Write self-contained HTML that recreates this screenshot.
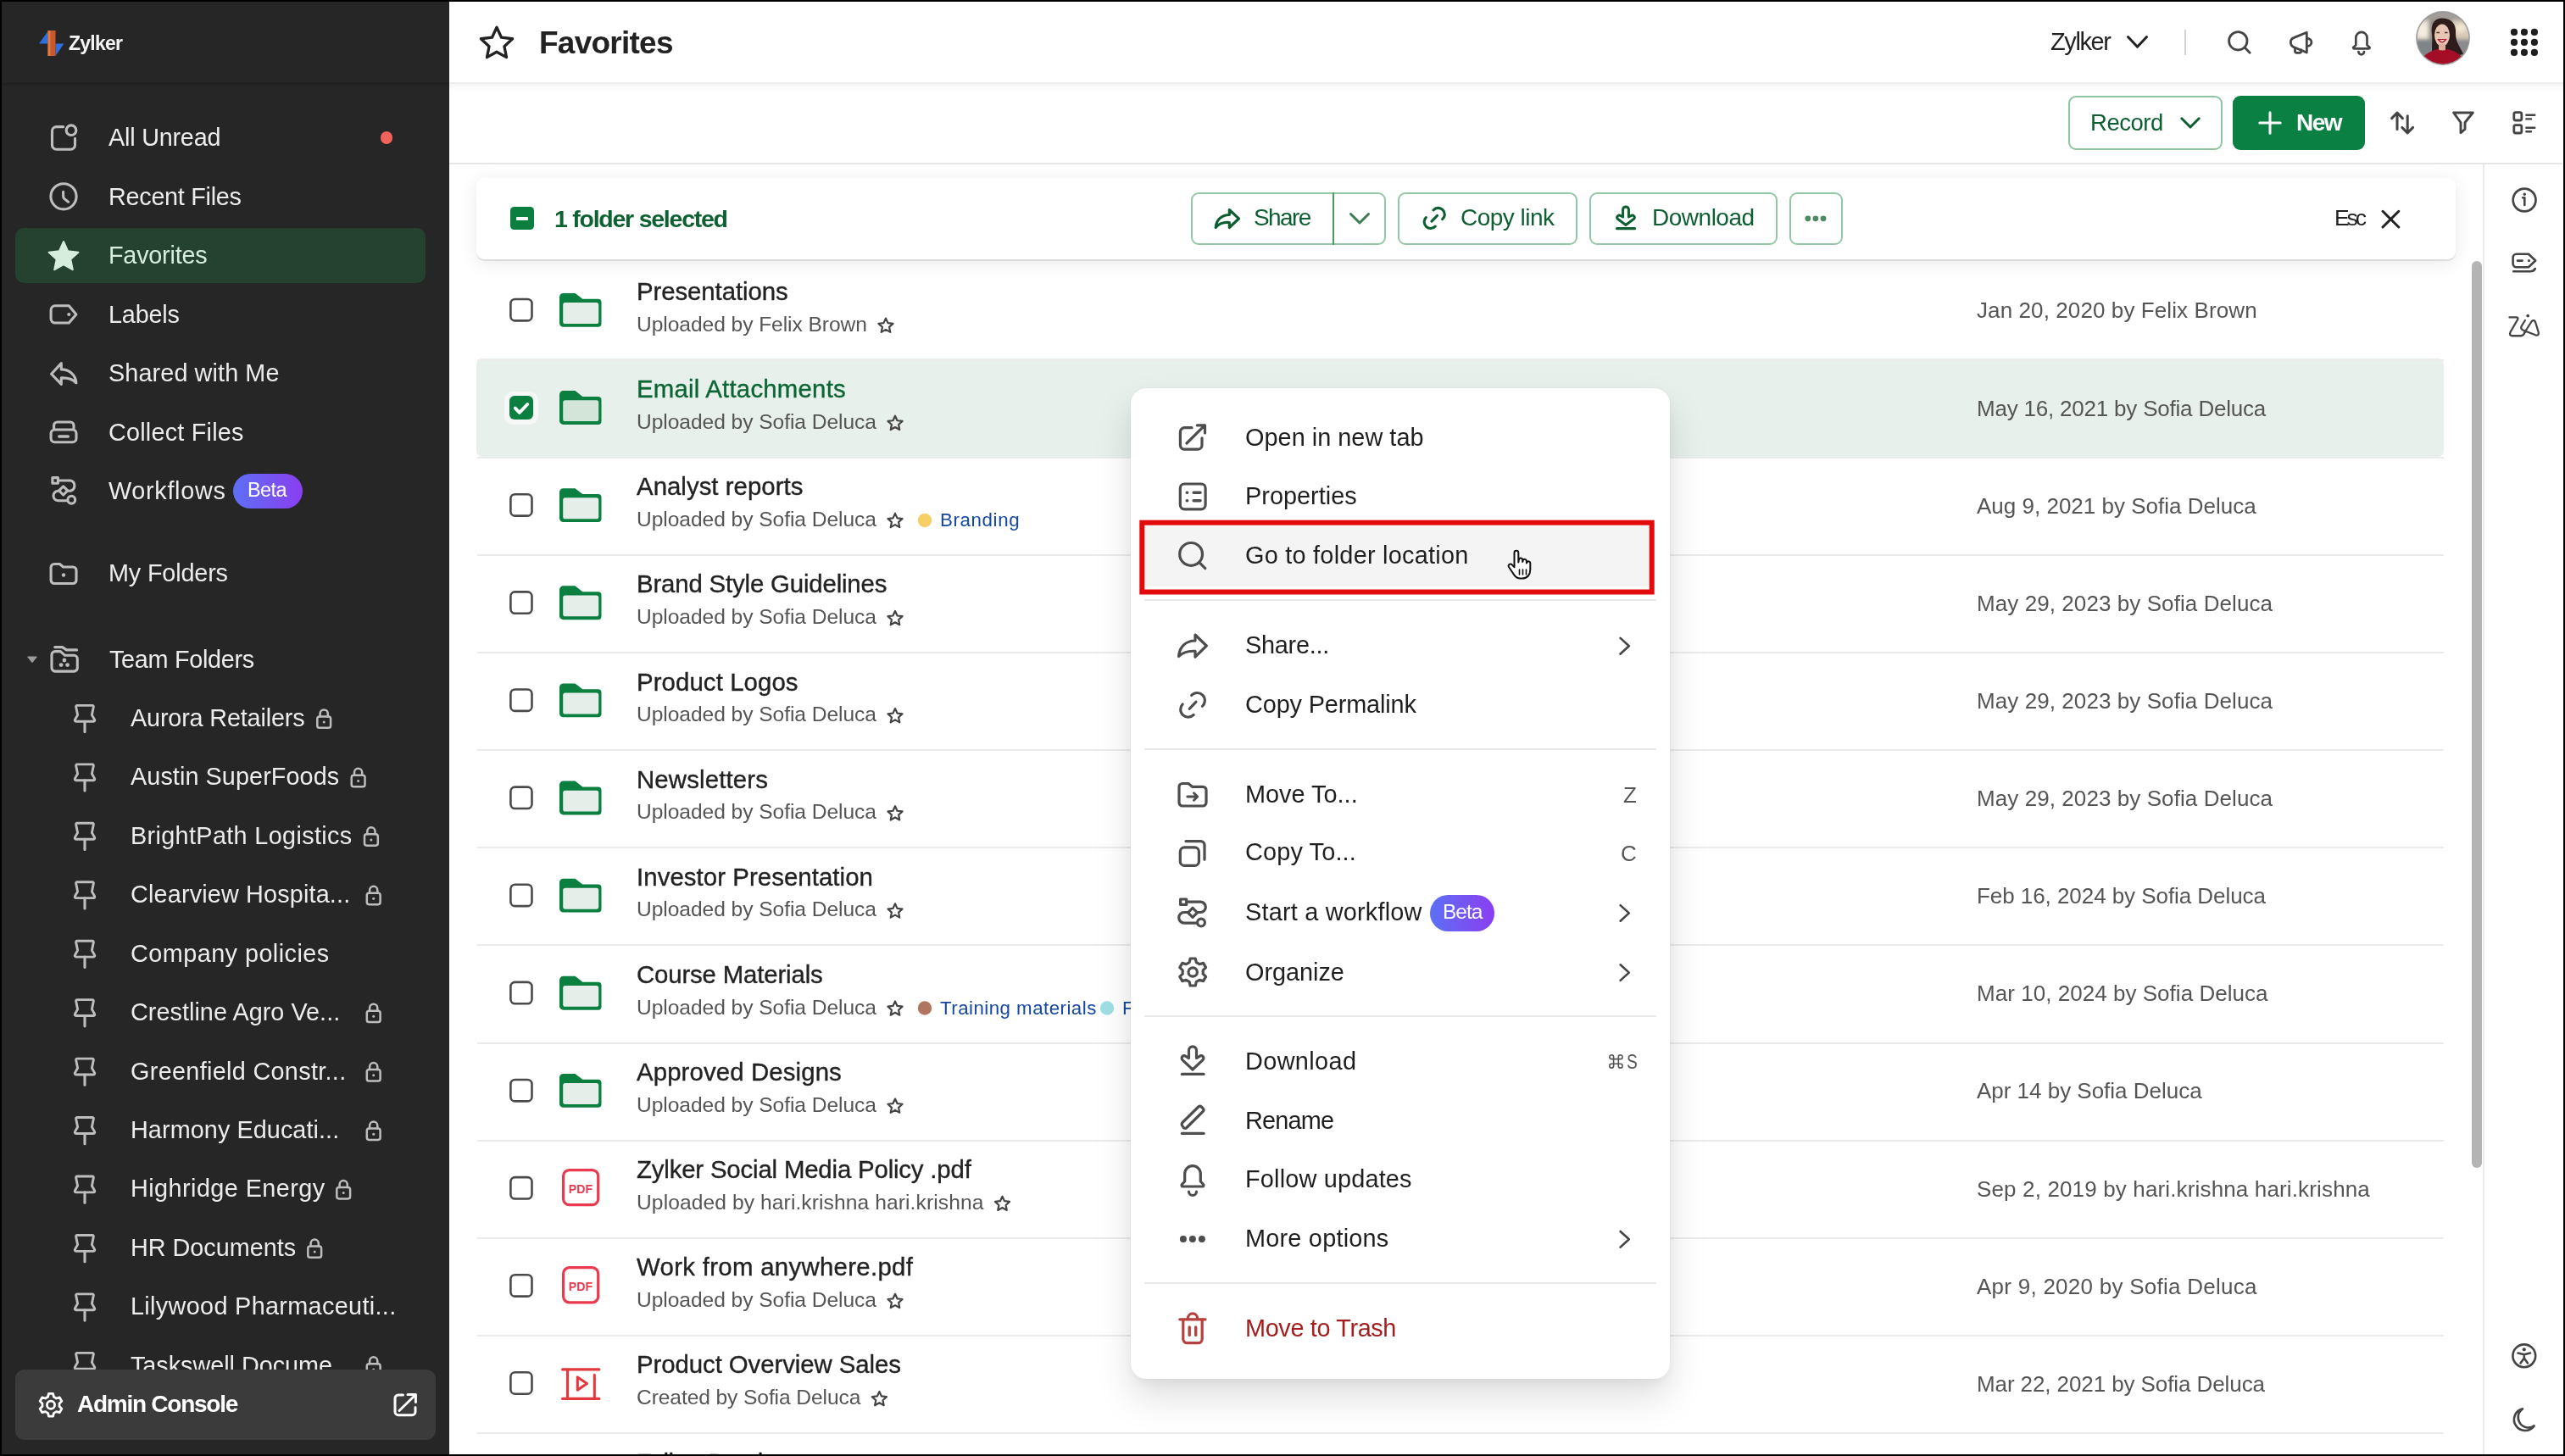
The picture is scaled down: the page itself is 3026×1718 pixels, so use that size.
<!DOCTYPE html><html><head><meta charset="utf-8"><style>
html,body{margin:0;padding:0;}
body{width:3026px;height:1718px;background:#000;position:relative;overflow:hidden;font-family:"Liberation Sans",sans-serif;}
.t{position:absolute;white-space:nowrap;line-height:1;will-change:transform;}
.r{position:absolute;display:block;}
</style></head><body>
<div class="r" style="left:2.00px;top:2.00px;width:3022.00px;height:1714.00px;background:#fff;"></div>
<div class="r" style="left:2.00px;top:2.00px;width:528.00px;height:1714.00px;background:#262626;"></div>
<div class="r" style="left:2.00px;top:97.50px;width:528.00px;height:1.50px;background:#1e1e1e;"></div>
<div class="r" style="left:2.00px;top:99.00px;width:528.00px;height:4.00px;background:linear-gradient(#222222,#262626);"></div>
<div class="t" style="left:81.0px;top:39.5px;font-size:23.00px;color:#f4f4f4;font-weight:700;letter-spacing:-0.753px;">Zylker</div>
<div class="r" style="left:18.00px;top:269.00px;width:484.00px;height:65.00px;background:#25412f;border-radius:10px;"></div>
<div class="t" style="left:127.5px;top:147.6px;font-size:28.80px;color:#ececec;letter-spacing:-0.219px;">All Unread</div>
<div class="t" style="left:127.5px;top:217.6px;font-size:28.80px;color:#ececec;letter-spacing:-0.278px;">Recent Files</div>
<div class="t" style="left:127.5px;top:356.6px;font-size:28.80px;color:#ececec;letter-spacing:-0.174px;">Labels</div>
<div class="t" style="left:127.5px;top:425.6px;font-size:28.80px;color:#ececec;letter-spacing:0.108px;">Shared with Me</div>
<div class="t" style="left:127.5px;top:495.6px;font-size:28.80px;color:#ececec;letter-spacing:0.221px;">Collect Files</div>
<div class="t" style="left:127.5px;top:564.6px;font-size:28.80px;color:#ececec;letter-spacing:0.689px;">Workflows</div>
<div class="t" style="left:127.5px;top:661.6px;font-size:28.80px;color:#ececec;letter-spacing:-0.159px;">My Folders</div>
<div class="t" style="left:128.8px;top:763.6px;font-size:28.80px;color:#ececec;letter-spacing:-0.297px;">Team Folders</div>
<div class="t" style="left:127.5px;top:286.6px;font-size:28.80px;color:#d6ecdd;letter-spacing:-0.230px;">Favorites</div>
<div class="r" style="left:448.70px;top:155.30px;width:14.60px;height:14.60px;background:#f0625c;border-radius:50%;"></div>
<div class="r" style="left:275.00px;top:559.00px;width:82.00px;height:41.00px;background:linear-gradient(90deg,#5d70f6,#8a3ef1);border-radius:21px;"></div>
<div class="t" style="left:292.0px;top:566.8px;font-size:23.50px;color:#ffffff;letter-spacing:-0.615px;">Beta</div>
<div class="r" style="left:0;top:0;width:530px;height:1616px;overflow:hidden;">
<div class="t" style="left:153.8px;top:832.8px;font-size:28.80px;color:#ececec;letter-spacing:-0.166px;">Aurora Retailers</div>
<div class="t" style="left:153.8px;top:902.3px;font-size:28.80px;color:#ececec;letter-spacing:0.078px;">Austin SuperFoods</div>
<div class="t" style="left:153.8px;top:971.7px;font-size:28.80px;color:#ececec;letter-spacing:0.351px;">BrightPath Logistics</div>
<div class="t" style="left:153.8px;top:1041.2px;font-size:28.80px;color:#ececec;letter-spacing:0.163px;">Clearview Hospita...</div>
<div class="t" style="left:153.8px;top:1110.6px;font-size:28.80px;color:#ececec;letter-spacing:0.459px;">Company policies</div>
<div class="t" style="left:153.8px;top:1180.1px;font-size:28.80px;color:#ececec;letter-spacing:0.035px;">Crestline Agro Ve...</div>
<div class="t" style="left:153.8px;top:1249.5px;font-size:28.80px;color:#ececec;letter-spacing:0.320px;">Greenfield Constr...</div>
<div class="t" style="left:153.8px;top:1319.0px;font-size:28.80px;color:#ececec;letter-spacing:0.076px;">Harmony Educati...</div>
<div class="t" style="left:153.8px;top:1388.4px;font-size:28.80px;color:#ececec;letter-spacing:0.444px;">Highridge Energy</div>
<div class="t" style="left:153.8px;top:1457.9px;font-size:28.80px;color:#ececec;letter-spacing:-0.006px;">HR Documents</div>
<div class="t" style="left:153.8px;top:1527.3px;font-size:28.80px;color:#ececec;letter-spacing:0.338px;">Lilywood Pharmaceuti...</div>
<div class="t" style="left:153.8px;top:1596.8px;font-size:28.80px;color:#ececec;letter-spacing:-0.027px;">Taskswell Docume...</div>
<svg class="r" style="left:0;top:0" width="3026" height="1718" viewBox="0 0 3026 1718"><g transform="translate(0 0.00)"><path d="M91 832.4 H109 A1.4 1.4 0 0 1 110.3 834.3 L108.4 843.6 L111.6 849.2 A1.4 1.4 0 0 1 110.4 851.3 H89.6 A1.4 1.4 0 0 1 88.4 849.2 L91.6 843.6 L89.7 834.3 A1.4 1.4 0 0 1 91 832.4 Z" fill="none" stroke="#bdbdbd" stroke-width="2.9" stroke-linecap="round" stroke-linejoin="round" /><path d="M100 851.3 V863.6" fill="none" stroke="#bdbdbd" stroke-width="3.1" stroke-linecap="round" stroke-linejoin="round" /><g transform="translate(-0.90 0)"><rect x="375.2" y="845.4" width="15.8" height="13.4" rx="2.6" fill="none" stroke="#bdbdbd" stroke-width="2.5"/><path d="M378.5 845.4 V842 A4.6 4.6 0 0 1 387.7 842 V845.4" fill="none" stroke="#bdbdbd" stroke-width="2.5" stroke-linecap="round" stroke-linejoin="round" /><circle cx="383.10" cy="852.00" r="1.50" fill="#bdbdbd"/></g></g><g transform="translate(0 69.45)"><path d="M91 832.4 H109 A1.4 1.4 0 0 1 110.3 834.3 L108.4 843.6 L111.6 849.2 A1.4 1.4 0 0 1 110.4 851.3 H89.6 A1.4 1.4 0 0 1 88.4 849.2 L91.6 843.6 L89.7 834.3 A1.4 1.4 0 0 1 91 832.4 Z" fill="none" stroke="#bdbdbd" stroke-width="2.9" stroke-linecap="round" stroke-linejoin="round" /><path d="M100 851.3 V863.6" fill="none" stroke="#bdbdbd" stroke-width="3.1" stroke-linecap="round" stroke-linejoin="round" /><g transform="translate(39.50 0)"><rect x="375.2" y="845.4" width="15.8" height="13.4" rx="2.6" fill="none" stroke="#bdbdbd" stroke-width="2.5"/><path d="M378.5 845.4 V842 A4.6 4.6 0 0 1 387.7 842 V845.4" fill="none" stroke="#bdbdbd" stroke-width="2.5" stroke-linecap="round" stroke-linejoin="round" /><circle cx="383.10" cy="852.00" r="1.50" fill="#bdbdbd"/></g></g><g transform="translate(0 138.90)"><path d="M91 832.4 H109 A1.4 1.4 0 0 1 110.3 834.3 L108.4 843.6 L111.6 849.2 A1.4 1.4 0 0 1 110.4 851.3 H89.6 A1.4 1.4 0 0 1 88.4 849.2 L91.6 843.6 L89.7 834.3 A1.4 1.4 0 0 1 91 832.4 Z" fill="none" stroke="#bdbdbd" stroke-width="2.9" stroke-linecap="round" stroke-linejoin="round" /><path d="M100 851.3 V863.6" fill="none" stroke="#bdbdbd" stroke-width="3.1" stroke-linecap="round" stroke-linejoin="round" /><g transform="translate(54.80 0)"><rect x="375.2" y="845.4" width="15.8" height="13.4" rx="2.6" fill="none" stroke="#bdbdbd" stroke-width="2.5"/><path d="M378.5 845.4 V842 A4.6 4.6 0 0 1 387.7 842 V845.4" fill="none" stroke="#bdbdbd" stroke-width="2.5" stroke-linecap="round" stroke-linejoin="round" /><circle cx="383.10" cy="852.00" r="1.50" fill="#bdbdbd"/></g></g><g transform="translate(0 208.35)"><path d="M91 832.4 H109 A1.4 1.4 0 0 1 110.3 834.3 L108.4 843.6 L111.6 849.2 A1.4 1.4 0 0 1 110.4 851.3 H89.6 A1.4 1.4 0 0 1 88.4 849.2 L91.6 843.6 L89.7 834.3 A1.4 1.4 0 0 1 91 832.4 Z" fill="none" stroke="#bdbdbd" stroke-width="2.9" stroke-linecap="round" stroke-linejoin="round" /><path d="M100 851.3 V863.6" fill="none" stroke="#bdbdbd" stroke-width="3.1" stroke-linecap="round" stroke-linejoin="round" /><g transform="translate(57.60 0)"><rect x="375.2" y="845.4" width="15.8" height="13.4" rx="2.6" fill="none" stroke="#bdbdbd" stroke-width="2.5"/><path d="M378.5 845.4 V842 A4.6 4.6 0 0 1 387.7 842 V845.4" fill="none" stroke="#bdbdbd" stroke-width="2.5" stroke-linecap="round" stroke-linejoin="round" /><circle cx="383.10" cy="852.00" r="1.50" fill="#bdbdbd"/></g></g><g transform="translate(0 277.80)"><path d="M91 832.4 H109 A1.4 1.4 0 0 1 110.3 834.3 L108.4 843.6 L111.6 849.2 A1.4 1.4 0 0 1 110.4 851.3 H89.6 A1.4 1.4 0 0 1 88.4 849.2 L91.6 843.6 L89.7 834.3 A1.4 1.4 0 0 1 91 832.4 Z" fill="none" stroke="#bdbdbd" stroke-width="2.9" stroke-linecap="round" stroke-linejoin="round" /><path d="M100 851.3 V863.6" fill="none" stroke="#bdbdbd" stroke-width="3.1" stroke-linecap="round" stroke-linejoin="round" /></g><g transform="translate(0 347.25)"><path d="M91 832.4 H109 A1.4 1.4 0 0 1 110.3 834.3 L108.4 843.6 L111.6 849.2 A1.4 1.4 0 0 1 110.4 851.3 H89.6 A1.4 1.4 0 0 1 88.4 849.2 L91.6 843.6 L89.7 834.3 A1.4 1.4 0 0 1 91 832.4 Z" fill="none" stroke="#bdbdbd" stroke-width="2.9" stroke-linecap="round" stroke-linejoin="round" /><path d="M100 851.3 V863.6" fill="none" stroke="#bdbdbd" stroke-width="3.1" stroke-linecap="round" stroke-linejoin="round" /><g transform="translate(57.60 0)"><rect x="375.2" y="845.4" width="15.8" height="13.4" rx="2.6" fill="none" stroke="#bdbdbd" stroke-width="2.5"/><path d="M378.5 845.4 V842 A4.6 4.6 0 0 1 387.7 842 V845.4" fill="none" stroke="#bdbdbd" stroke-width="2.5" stroke-linecap="round" stroke-linejoin="round" /><circle cx="383.10" cy="852.00" r="1.50" fill="#bdbdbd"/></g></g><g transform="translate(0 416.70)"><path d="M91 832.4 H109 A1.4 1.4 0 0 1 110.3 834.3 L108.4 843.6 L111.6 849.2 A1.4 1.4 0 0 1 110.4 851.3 H89.6 A1.4 1.4 0 0 1 88.4 849.2 L91.6 843.6 L89.7 834.3 A1.4 1.4 0 0 1 91 832.4 Z" fill="none" stroke="#bdbdbd" stroke-width="2.9" stroke-linecap="round" stroke-linejoin="round" /><path d="M100 851.3 V863.6" fill="none" stroke="#bdbdbd" stroke-width="3.1" stroke-linecap="round" stroke-linejoin="round" /><g transform="translate(57.60 0)"><rect x="375.2" y="845.4" width="15.8" height="13.4" rx="2.6" fill="none" stroke="#bdbdbd" stroke-width="2.5"/><path d="M378.5 845.4 V842 A4.6 4.6 0 0 1 387.7 842 V845.4" fill="none" stroke="#bdbdbd" stroke-width="2.5" stroke-linecap="round" stroke-linejoin="round" /><circle cx="383.10" cy="852.00" r="1.50" fill="#bdbdbd"/></g></g><g transform="translate(0 486.15)"><path d="M91 832.4 H109 A1.4 1.4 0 0 1 110.3 834.3 L108.4 843.6 L111.6 849.2 A1.4 1.4 0 0 1 110.4 851.3 H89.6 A1.4 1.4 0 0 1 88.4 849.2 L91.6 843.6 L89.7 834.3 A1.4 1.4 0 0 1 91 832.4 Z" fill="none" stroke="#bdbdbd" stroke-width="2.9" stroke-linecap="round" stroke-linejoin="round" /><path d="M100 851.3 V863.6" fill="none" stroke="#bdbdbd" stroke-width="3.1" stroke-linecap="round" stroke-linejoin="round" /><g transform="translate(57.60 0)"><rect x="375.2" y="845.4" width="15.8" height="13.4" rx="2.6" fill="none" stroke="#bdbdbd" stroke-width="2.5"/><path d="M378.5 845.4 V842 A4.6 4.6 0 0 1 387.7 842 V845.4" fill="none" stroke="#bdbdbd" stroke-width="2.5" stroke-linecap="round" stroke-linejoin="round" /><circle cx="383.10" cy="852.00" r="1.50" fill="#bdbdbd"/></g></g><g transform="translate(0 555.60)"><path d="M91 832.4 H109 A1.4 1.4 0 0 1 110.3 834.3 L108.4 843.6 L111.6 849.2 A1.4 1.4 0 0 1 110.4 851.3 H89.6 A1.4 1.4 0 0 1 88.4 849.2 L91.6 843.6 L89.7 834.3 A1.4 1.4 0 0 1 91 832.4 Z" fill="none" stroke="#bdbdbd" stroke-width="2.9" stroke-linecap="round" stroke-linejoin="round" /><path d="M100 851.3 V863.6" fill="none" stroke="#bdbdbd" stroke-width="3.1" stroke-linecap="round" stroke-linejoin="round" /><g transform="translate(22.10 0)"><rect x="375.2" y="845.4" width="15.8" height="13.4" rx="2.6" fill="none" stroke="#bdbdbd" stroke-width="2.5"/><path d="M378.5 845.4 V842 A4.6 4.6 0 0 1 387.7 842 V845.4" fill="none" stroke="#bdbdbd" stroke-width="2.5" stroke-linecap="round" stroke-linejoin="round" /><circle cx="383.10" cy="852.00" r="1.50" fill="#bdbdbd"/></g></g><g transform="translate(0 625.05)"><path d="M91 832.4 H109 A1.4 1.4 0 0 1 110.3 834.3 L108.4 843.6 L111.6 849.2 A1.4 1.4 0 0 1 110.4 851.3 H89.6 A1.4 1.4 0 0 1 88.4 849.2 L91.6 843.6 L89.7 834.3 A1.4 1.4 0 0 1 91 832.4 Z" fill="none" stroke="#bdbdbd" stroke-width="2.9" stroke-linecap="round" stroke-linejoin="round" /><path d="M100 851.3 V863.6" fill="none" stroke="#bdbdbd" stroke-width="3.1" stroke-linecap="round" stroke-linejoin="round" /><g transform="translate(-11.90 0)"><rect x="375.2" y="845.4" width="15.8" height="13.4" rx="2.6" fill="none" stroke="#bdbdbd" stroke-width="2.5"/><path d="M378.5 845.4 V842 A4.6 4.6 0 0 1 387.7 842 V845.4" fill="none" stroke="#bdbdbd" stroke-width="2.5" stroke-linecap="round" stroke-linejoin="round" /><circle cx="383.10" cy="852.00" r="1.50" fill="#bdbdbd"/></g></g><g transform="translate(0 694.50)"><path d="M91 832.4 H109 A1.4 1.4 0 0 1 110.3 834.3 L108.4 843.6 L111.6 849.2 A1.4 1.4 0 0 1 110.4 851.3 H89.6 A1.4 1.4 0 0 1 88.4 849.2 L91.6 843.6 L89.7 834.3 A1.4 1.4 0 0 1 91 832.4 Z" fill="none" stroke="#bdbdbd" stroke-width="2.9" stroke-linecap="round" stroke-linejoin="round" /><path d="M100 851.3 V863.6" fill="none" stroke="#bdbdbd" stroke-width="3.1" stroke-linecap="round" stroke-linejoin="round" /></g><g transform="translate(0 763.95)"><path d="M91 832.4 H109 A1.4 1.4 0 0 1 110.3 834.3 L108.4 843.6 L111.6 849.2 A1.4 1.4 0 0 1 110.4 851.3 H89.6 A1.4 1.4 0 0 1 88.4 849.2 L91.6 843.6 L89.7 834.3 A1.4 1.4 0 0 1 91 832.4 Z" fill="none" stroke="#bdbdbd" stroke-width="2.9" stroke-linecap="round" stroke-linejoin="round" /><path d="M100 851.3 V863.6" fill="none" stroke="#bdbdbd" stroke-width="3.1" stroke-linecap="round" stroke-linejoin="round" /><g transform="translate(57.60 0)"><rect x="375.2" y="845.4" width="15.8" height="13.4" rx="2.6" fill="none" stroke="#bdbdbd" stroke-width="2.5"/><path d="M378.5 845.4 V842 A4.6 4.6 0 0 1 387.7 842 V845.4" fill="none" stroke="#bdbdbd" stroke-width="2.5" stroke-linecap="round" stroke-linejoin="round" /><circle cx="383.10" cy="852.00" r="1.50" fill="#bdbdbd"/></g></g></svg>
</div>
<svg class="r" style="left:0;top:0" width="3026" height="1718" viewBox="0 0 3026 1718"><path d="M46 51.5 L56.5 37 V51.5 Z" fill="#2f6fe0"/><path d="M65.5 51.5 H75.5 L65.5 66 Z" fill="#2f6fe0"/><rect x="56.5" y="36" width="9" height="30" fill="#c9592c"/><rect x="56.5" y="36" width="3" height="30" fill="#e07a45"/><path d="M74.7 149.6 H66.5 A5 5 0 0 0 61.5 154.6 V171.2 A5 5 0 0 0 66.5 176.2 H83.5 A5 5 0 0 0 88.5 171.2 V163.4" fill="none" stroke="#bdbdbd" stroke-width="3.1" stroke-linecap="round" stroke-linejoin="round" /><circle cx="84.00" cy="153.70" r="5.80" fill="none" stroke="#bdbdbd" stroke-width="3.1"/><circle cx="75.00" cy="231.80" r="15.10" fill="none" stroke="#bdbdbd" stroke-width="3.1"/><path d="M74.6 226.2 V231.3 Q74.6 233.2 76 234.6 L80.6 238.2" fill="none" stroke="#bdbdbd" stroke-width="3.1" stroke-linecap="round" stroke-linejoin="round" /><path d="M75.00 285.20 L80.05 296.44 L92.31 297.78 L83.18 306.06 L85.70 318.12 L75.00 312.00 L64.30 318.12 L66.82 306.06 L57.69 297.78 L69.95 296.44 Z" fill="#d6ecdd" stroke="#d6ecdd" stroke-width="2.2" stroke-linecap="round" stroke-linejoin="round" /><path d="M65 360.8 H81.3 L89.9 370.9 L81.3 381 H65 A4.9 4.9 0 0 1 60.1 376.1 V365.7 A4.9 4.9 0 0 1 65 360.8 Z" fill="none" stroke="#bdbdbd" stroke-width="3.1" stroke-linecap="round" stroke-linejoin="round" /><circle cx="81.30" cy="371.00" r="2.10" fill="#bdbdbd"/><path d="M60.6 441.2 L72.3 428.6 V435.9 C82 436 89.2 442.3 89.9 451.8 C85.8 447.6 79.5 445.6 72.3 445.9 V453.4 Z" fill="none" stroke="#bdbdbd" stroke-width="3.1" stroke-linecap="round" stroke-linejoin="round" /><path d="M63.6 506.5 V502 A4 4 0 0 1 67.6 498 H83 A4 4 0 0 1 87 502 V506.5" fill="none" stroke="#bdbdbd" stroke-width="3.1" stroke-linecap="round" stroke-linejoin="round" /><path d="M64.6 507 H85.5 A4.5 4.5 0 0 1 90 511.5 V517.3 A4.5 4.5 0 0 1 85.5 521.8 H64.6 A4.5 4.5 0 0 1 60.1 517.3 V511.5 A4.5 4.5 0 0 1 64.6 507 Z" fill="none" stroke="#bdbdbd" stroke-width="3.1" stroke-linecap="round" stroke-linejoin="round" /><path d="M69.8 515 H80.3" fill="none" stroke="#bdbdbd" stroke-width="3.6" stroke-linecap="round" stroke-linejoin="round" /><path d="M61.9 563.6 H68.4 V570.2 H61.9 Z" fill="none" stroke="#bdbdbd" stroke-width="3.1" stroke-linecap="round" stroke-linejoin="round" /><path d="M68.5 567 H83 A6.25 6.25 0 0 1 83 579.2 H68.8 A5.8 5.8 0 0 0 68.8 590.8 H79.6" fill="none" stroke="#bdbdbd" stroke-width="3.1" stroke-linecap="round" stroke-linejoin="round" /><circle cx="84.30" cy="589.70" r="4.40" fill="#262626" stroke="#bdbdbd" stroke-width="3.1"/><path d="M74.7 573.8 L79.8 578.9 L74.7 584 L69.6 578.9 Z" fill="#262626" stroke="#bdbdbd" stroke-width="3.1" stroke-linecap="round" stroke-linejoin="round" /><path d="M60.1 669.5 A4 4 0 0 1 64.1 665.5 H70.4 L74.6 669 H86 A4 4 0 0 1 90 673 V684.5 A4 4 0 0 1 86 688.5 H64.1 A4 4 0 0 1 60.1 684.5 Z" fill="none" stroke="#bdbdbd" stroke-width="3.1" stroke-linecap="round" stroke-linejoin="round" /><circle cx="75.00" cy="678.50" r="2.20" fill="#bdbdbd"/><path d="M32.6 775 H43.3 L38 781.7 Z" fill="#9c9c9c" stroke="#9c9c9c" stroke-width="1" stroke-linejoin="round"/><path d="M61 772.6 A4 4 0 0 1 65 768.6 H71.4 L76.6 773.3 H87.3 A4 4 0 0 1 91.3 777.3 V788.1 A4 4 0 0 1 87.3 792.1 H65 A4 4 0 0 1 61 788.1 Z" fill="none" stroke="#bdbdbd" stroke-width="3.1" stroke-linecap="round" stroke-linejoin="round" /><path d="M64.7 763.6 H73.6 L78.4 766.9 H90.6" fill="none" stroke="#bdbdbd" stroke-width="3.1" stroke-linecap="round" stroke-linejoin="round" /><circle cx="75.90" cy="779.00" r="2.40" fill="#bdbdbd"/><circle cx="72.10" cy="784.60" r="2.40" fill="#bdbdbd"/><circle cx="79.60" cy="784.60" r="2.40" fill="#bdbdbd"/></svg>
<div class="r" style="left:18.00px;top:1616.00px;width:496.00px;height:83.00px;background:#3b3b3b;border-radius:11px;"></div>
<svg class="r" style="left:0;top:0" width="3026" height="1718" viewBox="0 0 3026 1718"><path d="M57.47 1644.44 L62.53 1644.44 L63.46 1648.20 L66.58 1650.01 L70.31 1648.93 L72.84 1653.31 L70.04 1655.99 L70.04 1659.61 L72.84 1662.29 L70.31 1666.67 L66.58 1665.59 L63.46 1667.40 L62.53 1671.16 L57.47 1671.16 L56.54 1667.40 L53.42 1665.59 L49.69 1666.67 L47.16 1662.29 L49.96 1659.61 L49.96 1655.99 L47.16 1653.31 L49.69 1648.93 L53.42 1650.01 L56.54 1648.20 Z" fill="none" stroke="#ffffff" stroke-width="2.8" stroke-linecap="round" stroke-linejoin="round" /><circle cx="60.00" cy="1657.80" r="4.60" fill="none" stroke="#ffffff" stroke-width="2.8"/><path d="M475.5 1646 H470 A4 4 0 0 0 466 1650 V1665.7 A4 4 0 0 0 470 1669.7 H486 A4 4 0 0 0 490 1665.7 V1660.5" fill="none" stroke="#ffffff" stroke-width="3" stroke-linecap="round" stroke-linejoin="round" /><path d="M481 1645.6 H490.4 V1654.5" fill="none" stroke="#ffffff" stroke-width="3" stroke-linecap="round" stroke-linejoin="round" /><path d="M490 1646 L471 1664.5" fill="none" stroke="#ffffff" stroke-width="3" stroke-linecap="round" stroke-linejoin="round" /></svg>
<div class="t" style="left:90.8px;top:1643.3px;font-size:28.00px;color:#ffffff;font-weight:700;letter-spacing:-1.253px;">Admin Console</div>
<div class="r" style="left:530.00px;top:97.30px;width:2494.00px;height:1.40px;background:#eeeeee;"></div>
<div class="r" style="left:530.00px;top:98.70px;width:2494.00px;height:9.00px;background:linear-gradient(#f6f6f6,#ffffff);"></div>
<div class="t" style="left:636.0px;top:31.9px;font-size:37.00px;color:#222222;font-weight:700;letter-spacing:-0.752px;">Favorites</div>
<div class="t" style="left:2419.0px;top:34.9px;font-size:29.00px;color:#222222;letter-spacing:-1.389px;">Zylker</div>
<div class="r" style="left:2576.50px;top:35.00px;width:2.00px;height:29.50px;background:#d2d2d2;"></div>
<div class="r" style="left:530.00px;top:192.00px;width:2399.00px;height:1.50px;background:#e6e6e6;"></div>
<div class="r" style="left:2929.00px;top:192.00px;width:94.00px;height:1.50px;background:#e6e6e6;"></div>
<div class="r" style="left:2440.40px;top:113.10px;width:181.30px;height:63.60px;border:2px solid #8fc5a0;border-radius:9px;box-sizing:border-box;"></div>
<div class="t" style="left:2466.2px;top:131.0px;font-size:27.50px;color:#0d5f32;letter-spacing:-0.471px;">Record</div>
<div class="r" style="left:2634.00px;top:113.10px;width:155.80px;height:63.60px;background:#0a8043;border-radius:9px;"></div>
<div class="t" style="left:2709.0px;top:130.6px;font-size:28.00px;color:#ffffff;font-weight:700;letter-spacing:-1.486px;">New</div>
<div class="r" style="left:2929.00px;top:193.50px;width:1.50px;height:1522.50px;background:#ebebeb;"></div>
<svg class="r" style="left:0;top:0" width="3026" height="1718" viewBox="0 0 3026 1718"><path d="M586.00 32.20 L591.53 44.20 L604.64 45.74 L594.94 54.70 L597.52 67.66 L586.00 61.20 L574.48 67.66 L577.06 54.70 L567.36 45.74 L580.47 44.20 Z" fill="none" stroke="#222222" stroke-width="3.3" stroke-linecap="round" stroke-linejoin="round" /><path d="M2510.5 43.5 L2521.5 55.3 L2532.5 43.5" fill="none" stroke="#222222" stroke-width="3" stroke-linecap="round" stroke-linejoin="round" /><circle cx="2640.30" cy="48.30" r="10.70" fill="none" stroke="#444444" stroke-width="2.8"/><path d="M2648.3 56.3 L2654.2 62.2" fill="none" stroke="#444444" stroke-width="2.8" stroke-linecap="round" stroke-linejoin="round" /><path d="M2721.3 38.2 V62 L2706.5 55.8 A6 6 0 0 1 2706.5 44.4 Z" fill="none" stroke="#444444" stroke-width="2.8" stroke-linecap="round" stroke-linejoin="round" /><path d="M2707.5 56.5 V60.3 A2 2 0 0 0 2709.5 62.3 H2712.8 A2 2 0 0 0 2714.8 60.3 V59" fill="none" stroke="#444444" stroke-width="2.8" stroke-linecap="round" stroke-linejoin="round" /><path d="M2722.5 45.5 A4.3 4.3 0 0 1 2722.5 54.3" fill="none" stroke="#444444" stroke-width="2.8" stroke-linecap="round" stroke-linejoin="round" /><path d="M2779.3 53.3 V44.5 A6.6 6.6 0 0 1 2792.5 44.5 V53.3 L2795.6 56 A1.2 1.2 0 0 1 2794.8 57.3 H2777 A1.2 1.2 0 0 1 2776.2 56 Z" fill="none" stroke="#444444" stroke-width="2.7" stroke-linecap="round" stroke-linejoin="round" /><path d="M2782.4 61 A3.3 3.3 0 0 0 2789 61" fill="none" stroke="#444444" stroke-width="2.7" stroke-linecap="round" stroke-linejoin="round" /><defs><clipPath id="avc"><circle cx="2882" cy="45" r="30.4"/></clipPath><filter id="avb" x="-20%" y="-20%" width="140%" height="140%"><feGaussianBlur stdDeviation="2.2"/></filter><filter id="avb2" x="-20%" y="-20%" width="140%" height="140%"><feGaussianBlur stdDeviation="0.7"/></filter></defs><circle cx="2882.00" cy="45.00" r="31.90" fill="#9d9d9d"/><g clip-path="url(#avc)"><rect x="2848" y="10" width="70" height="70" fill="#8c8784"/><g filter="url(#avb)"><rect x="2846" y="8" width="74" height="16" fill="#a29c98"/><rect x="2846" y="24" width="20" height="24" fill="#e6dccd"/><ellipse cx="2858" cy="36" rx="6" ry="9" fill="#f4ede2"/><rect x="2846" y="46" width="24" height="30" fill="#7f8489"/><rect x="2892" y="24" width="26" height="22" fill="#d9cbb7"/><ellipse cx="2903" cy="33" rx="7" ry="5" fill="#f2e6d2"/><rect x="2892" y="46" width="26" height="30" fill="#8b8b8e"/></g><g filter="url(#avb2)"><path d="M2869 40 C2867 26 2874 21 2882 21.5 C2892 22 2898 28 2897 40 C2897 50 2903 56 2906 64 L2896 66 L2870 64 C2868 56 2870 50 2869 40 Z" fill="#2e1f1b"/><ellipse cx="2881" cy="41.5" rx="9" ry="13" fill="#e9c6b3"/><rect x="2877" y="52" width="8" height="8" fill="#dcb09b"/><path d="M2876.5 46.6 Q2881 53 2885.5 46.6 Z" fill="#ffffff" stroke="#b8162c" stroke-width="1.3"/><path d="M2874.5 38.5 H2878 M2884 38.5 H2887.5" stroke="#3a2a24" stroke-width="1.3"/><path d="M2852 80 C2856 66 2866 60 2876 58 Q2881 61 2887 58 C2898 60 2906 66 2912 80 Z" fill="#a50f28"/></g></g><circle cx="2966.00" cy="37.90" r="4.10" fill="#1e1e1e"/><circle cx="2977.95" cy="37.90" r="4.10" fill="#1e1e1e"/><circle cx="2989.90" cy="37.90" r="4.10" fill="#1e1e1e"/><circle cx="2966.00" cy="49.90" r="4.10" fill="#1e1e1e"/><circle cx="2977.95" cy="49.90" r="4.10" fill="#1e1e1e"/><circle cx="2989.90" cy="49.90" r="4.10" fill="#1e1e1e"/><circle cx="2966.00" cy="61.90" r="4.10" fill="#1e1e1e"/><circle cx="2977.95" cy="61.90" r="4.10" fill="#1e1e1e"/><circle cx="2989.90" cy="61.90" r="4.10" fill="#1e1e1e"/><path d="M2573.8 139.8 L2584 150 L2594.2 139.8" fill="none" stroke="#0d5f32" stroke-width="3" stroke-linecap="round" stroke-linejoin="round" /><path d="M2678 132.8 V157.3 M2665.8 145 H2690.2" fill="none" stroke="#ffffff" stroke-width="3" stroke-linecap="round" stroke-linejoin="round" /><path d="M2828 152.6 V133 M2821.6 139.6 L2828 133 L2834.4 139.6" fill="none" stroke="#444444" stroke-width="3" stroke-linecap="round" stroke-linejoin="round" /><path d="M2840.2 136.8 V157 M2833.8 150.4 L2840.2 157 L2846.6 150.4" fill="none" stroke="#444444" stroke-width="3" stroke-linecap="round" stroke-linejoin="round" /><path d="M2894.6 133 H2917.3 L2908 144.5 V152.5 L2903 156.6 V144.5 Z" fill="none" stroke="#444444" stroke-width="2.9" stroke-linecap="round" stroke-linejoin="round" /><rect x="2965.8" y="132.7" width="9" height="9.3" rx="2" fill="none" stroke="#444444" stroke-width="2.8"/><rect x="2965.8" y="147.7" width="9" height="9.3" rx="2" fill="none" stroke="#444444" stroke-width="2.8"/><path d="M2980.3 135.7 H2990.3 M2980.3 140.4 H2986 M2980.3 150.7 H2990.3 M2980.3 155.3 H2986" fill="none" stroke="#444444" stroke-width="2.4" stroke-linecap="round" stroke-linejoin="round" /><circle cx="2978.10" cy="236.00" r="13.40" fill="none" stroke="#444444" stroke-width="2.7"/><circle cx="2978.30" cy="229.30" r="1.70" fill="#444444"/><path d="M2976.2 233.3 H2978.3 V242" fill="none" stroke="#444444" stroke-width="2.6" stroke-linecap="round" stroke-linejoin="round" /><path d="M2968.8 299.8 H2983 L2991.2 307.5 L2983 315.2 H2968.8 A4.2 4.2 0 0 1 2964.6 311 V304 A4.2 4.2 0 0 1 2968.8 299.8 Z" fill="none" stroke="#444444" stroke-width="2.6" stroke-linecap="round" stroke-linejoin="round" /><path d="M2970 307.6 H2975.7" fill="none" stroke="#444444" stroke-width="2.6" stroke-linecap="round" stroke-linejoin="round" /><circle cx="2983.50" cy="307.60" r="1.60" fill="#444444"/><path d="M2965.2 320.2 H2985 Q2989 320.2 2990.8 317" fill="none" stroke="#444444" stroke-width="2.6" stroke-linecap="round" stroke-linejoin="round" /><path d="M2960.5 374.4 H2968.2 Q2971.5 374.4 2970 377.2 L2961.6 391.8 Q2959.8 396.25 2964 396.25 H2974 Q2976.5 396.25 2978 393.5 L2979.4 390.6" fill="none" stroke="#444444" stroke-width="2.3" stroke-linecap="round" stroke-linejoin="round" /><path d="M2978.9 378 L2974.6 385 Q2973.2 388.5 2977.5 390 L2991.2 395.3 Q2995.8 396.5 2994.6 391.5 L2991.2 380.5 Q2989.8 376.5 2986.8 379 L2977.8 393" fill="none" stroke="#444444" stroke-width="2.3" stroke-linecap="round" stroke-linejoin="round" /><circle cx="2982.20" cy="372.60" r="1.90" fill="#444444"/><circle cx="2977.80" cy="1599.80" r="13.40" fill="none" stroke="#444444" stroke-width="2.6"/><circle cx="2977.80" cy="1592.30" r="2.10" fill="#444444"/><path d="M2970.5 1596.5 L2977.8 1598.3 L2985 1596.5 M2977.8 1598.3 V1602.5 L2973.5 1608.5 M2977.8 1602.5 L2982 1608.5" fill="none" stroke="#444444" stroke-width="2.6" stroke-linecap="round" stroke-linejoin="round" /><path d="M2989.6 1682.4 A13 13 0 1 1 2976 1662.3 A10.5 10.5 0 0 0 2989.6 1682.4 Z" fill="none" stroke="#444444" stroke-width="2.6" stroke-linecap="round" stroke-linejoin="round" /></svg>
<div class="r" style="left:2916.00px;top:307.50px;width:12.00px;height:1070.50px;background:#b4b4b4;border-radius:6px;"></div>
<div class="r" style="left:0;top:0;width:2929px;height:1716px;overflow:hidden;clip-path:inset(306px 0 0 530px);">
<div class="r" style="left:562.00px;top:423.00px;width:2321.40px;height:116.00px;background:#e7f0eb;border-radius:7px;"></div>
<div class="r" style="left:563.00px;top:423.72px;width:2320.40px;height:2.00px;background:#ebebeb;"></div>
<div class="t" style="left:750.6px;top:329.0px;font-size:29.40px;color:#222222;letter-spacing:-0.090px;-webkit-text-stroke:0.35px #222222;">Presentations</div>
<div class="t" style="left:750.6px;top:370.7px;font-size:24.60px;color:#555555;letter-spacing:-0.067px;">Uploaded by Felix Brown</div>
<div class="t" style="left:2332.0px;top:353.4px;font-size:26.00px;color:#555555;letter-spacing:0.097px;">Jan 20, 2020 by Felix Brown</div>
<div class="r" style="left:563.00px;top:538.84px;width:2320.40px;height:2.00px;background:#ebebeb;"></div>
<div class="r" style="left:595.30px;top:461.50px;width:39.40px;height:39.50px;background:#f5f8f6;border-radius:10px;"></div>
<div class="r" style="left:601.10px;top:467.10px;width:27.80px;height:28.00px;background:#0b7f40;border-radius:6px;"></div>
<div class="t" style="left:750.6px;top:444.1px;font-size:29.40px;color:#0c6534;letter-spacing:0.208px;-webkit-text-stroke:0.35px #0c6534;">Email Attachments</div>
<div class="t" style="left:750.6px;top:485.8px;font-size:24.60px;color:#555555;letter-spacing:-0.063px;">Uploaded by Sofia Deluca</div>
<div class="t" style="left:2332.0px;top:468.5px;font-size:26.00px;color:#555555;letter-spacing:-0.207px;">May 16, 2021 by Sofia Deluca</div>
<div class="r" style="left:563.00px;top:653.96px;width:2320.40px;height:2.00px;background:#ebebeb;"></div>
<div class="t" style="left:750.6px;top:559.3px;font-size:29.40px;color:#222222;letter-spacing:0.022px;-webkit-text-stroke:0.35px #222222;">Analyst reports</div>
<div class="t" style="left:750.6px;top:600.9px;font-size:24.60px;color:#555555;letter-spacing:-0.063px;">Uploaded by Sofia Deluca</div>
<div class="t" style="left:1108.6px;top:602.9px;font-size:22.30px;color:#1548a3;letter-spacing:0.619px;">Branding</div>
<div class="t" style="left:2332.0px;top:583.6px;font-size:26.00px;color:#555555;letter-spacing:0.005px;">Aug 9, 2021 by Sofia Deluca</div>
<div class="r" style="left:563.00px;top:769.08px;width:2320.40px;height:2.00px;background:#ebebeb;"></div>
<div class="t" style="left:750.6px;top:674.4px;font-size:29.40px;color:#222222;letter-spacing:-0.170px;-webkit-text-stroke:0.35px #222222;">Brand Style Guidelines</div>
<div class="t" style="left:750.6px;top:716.0px;font-size:24.60px;color:#555555;letter-spacing:-0.063px;">Uploaded by Sofia Deluca</div>
<div class="t" style="left:2332.0px;top:698.8px;font-size:26.00px;color:#555555;letter-spacing:0.078px;">May 29, 2023 by Sofia Deluca</div>
<div class="r" style="left:563.00px;top:884.20px;width:2320.40px;height:2.00px;background:#ebebeb;"></div>
<div class="t" style="left:750.6px;top:789.5px;font-size:29.40px;color:#222222;letter-spacing:0.084px;-webkit-text-stroke:0.35px #222222;">Product Logos</div>
<div class="t" style="left:750.6px;top:831.2px;font-size:24.60px;color:#555555;letter-spacing:-0.063px;">Uploaded by Sofia Deluca</div>
<div class="t" style="left:2332.0px;top:813.9px;font-size:26.00px;color:#555555;letter-spacing:0.078px;">May 29, 2023 by Sofia Deluca</div>
<div class="r" style="left:563.00px;top:999.32px;width:2320.40px;height:2.00px;background:#ebebeb;"></div>
<div class="t" style="left:750.6px;top:904.6px;font-size:29.40px;color:#222222;letter-spacing:0.132px;-webkit-text-stroke:0.35px #222222;">Newsletters</div>
<div class="t" style="left:750.6px;top:946.3px;font-size:24.60px;color:#555555;letter-spacing:-0.063px;">Uploaded by Sofia Deluca</div>
<div class="t" style="left:2332.0px;top:929.0px;font-size:26.00px;color:#555555;letter-spacing:0.078px;">May 29, 2023 by Sofia Deluca</div>
<div class="r" style="left:563.00px;top:1114.44px;width:2320.40px;height:2.00px;background:#ebebeb;"></div>
<div class="t" style="left:750.6px;top:1019.7px;font-size:29.40px;color:#222222;letter-spacing:0.059px;-webkit-text-stroke:0.35px #222222;">Investor Presentation</div>
<div class="t" style="left:750.6px;top:1061.4px;font-size:24.60px;color:#555555;letter-spacing:-0.063px;">Uploaded by Sofia Deluca</div>
<div class="t" style="left:2332.0px;top:1044.1px;font-size:26.00px;color:#555555;letter-spacing:-0.058px;">Feb 16, 2024 by Sofia Deluca</div>
<div class="r" style="left:563.00px;top:1229.56px;width:2320.40px;height:2.00px;background:#ebebeb;"></div>
<div class="t" style="left:750.6px;top:1134.9px;font-size:29.40px;color:#222222;letter-spacing:-0.161px;-webkit-text-stroke:0.35px #222222;">Course Materials</div>
<div class="t" style="left:750.6px;top:1176.5px;font-size:24.60px;color:#555555;letter-spacing:-0.063px;">Uploaded by Sofia Deluca</div>
<div class="t" style="left:1108.6px;top:1178.5px;font-size:22.30px;color:#1548a3;letter-spacing:0.465px;">Training materials</div>
<div class="t" style="left:1323.6px;top:1178.5px;font-size:22.30px;color:#1548a3;">F</div>
<div class="t" style="left:2332.0px;top:1159.2px;font-size:26.00px;color:#555555;letter-spacing:0.036px;">Mar 10, 2024 by Sofia Deluca</div>
<div class="r" style="left:563.00px;top:1344.68px;width:2320.40px;height:2.00px;background:#ebebeb;"></div>
<div class="t" style="left:750.6px;top:1250.0px;font-size:29.40px;color:#222222;letter-spacing:0.110px;-webkit-text-stroke:0.35px #222222;">Approved Designs</div>
<div class="t" style="left:750.6px;top:1291.6px;font-size:24.60px;color:#555555;letter-spacing:-0.063px;">Uploaded by Sofia Deluca</div>
<div class="t" style="left:2332.0px;top:1274.4px;font-size:26.00px;color:#555555;letter-spacing:-0.016px;">Apr 14 by Sofia Deluca</div>
<div class="r" style="left:563.00px;top:1459.80px;width:2320.40px;height:2.00px;background:#ebebeb;"></div>
<div class="t" style="left:750.6px;top:1365.1px;font-size:29.40px;color:#222222;letter-spacing:-0.178px;-webkit-text-stroke:0.35px #222222;">Zylker Social Media Policy .pdf</div>
<div class="t" style="left:750.6px;top:1406.8px;font-size:24.60px;color:#555555;letter-spacing:0.094px;">Uploaded by hari.krishna hari.krishna</div>
<div class="t" style="left:2332.0px;top:1389.5px;font-size:26.00px;color:#555555;letter-spacing:0.145px;">Sep 2, 2019 by hari.krishna hari.krishna</div>
<div class="r" style="left:563.00px;top:1574.92px;width:2320.40px;height:2.00px;background:#ebebeb;"></div>
<div class="t" style="left:750.6px;top:1480.2px;font-size:29.40px;color:#222222;letter-spacing:0.299px;-webkit-text-stroke:0.35px #222222;">Work from anywhere.pdf</div>
<div class="t" style="left:750.6px;top:1521.9px;font-size:24.60px;color:#555555;letter-spacing:-0.063px;">Uploaded by Sofia Deluca</div>
<div class="t" style="left:2332.0px;top:1504.6px;font-size:26.00px;color:#555555;letter-spacing:0.259px;">Apr 9, 2020 by Sofia Deluca</div>
<div class="r" style="left:563.00px;top:1690.04px;width:2320.40px;height:2.00px;background:#ebebeb;"></div>
<div class="t" style="left:750.6px;top:1595.3px;font-size:29.40px;color:#222222;letter-spacing:-0.082px;-webkit-text-stroke:0.35px #222222;">Product Overview Sales</div>
<div class="t" style="left:750.6px;top:1637.0px;font-size:24.60px;color:#555555;letter-spacing:-0.102px;">Created by Sofia Deluca</div>
<div class="t" style="left:2332.0px;top:1619.7px;font-size:26.00px;color:#555555;letter-spacing:-0.094px;">Mar 22, 2021 by Sofia Deluca</div>
<div class="r" style="left:563.00px;top:1805.16px;width:2320.40px;height:2.00px;background:#ebebeb;"></div>
<div class="t" style="left:750.6px;top:1710.5px;font-size:29.40px;color:#222222;letter-spacing:-0.536px;-webkit-text-stroke:0.35px #222222;">Zylker Brochure</div>
<div class="t" style="left:750.6px;top:1752.1px;font-size:24.60px;color:#555555;letter-spacing:-0.063px;">Uploaded by Sofia Deluca</div>
<div class="t" style="left:2332.0px;top:1734.8px;font-size:26.00px;color:#555555;letter-spacing:-0.094px;">Mar 22, 2021 by Sofia Deluca</div>
<svg class="r" style="left:0;top:0" width="3026" height="1718" viewBox="0 0 3026 1718"><rect x="602.4" y="353.00" width="25.1" height="25.4" rx="5.2" fill="none" stroke="#4a4a4a" stroke-width="2.6"/><g transform="translate(0 345.80)"><path d="M660 4.7 A4.5 4.5 0 0 1 664.5 0.2 H678.5 L687.3 7 H705.5 A4 4 0 0 1 709.5 11 V36 A4 4 0 0 1 705.5 40 H664.5 A4.5 4.5 0 0 1 660 35.5 Z" fill="#0b7f40"/><rect x="664.2" y="11.3" width="42" height="24.9" rx="2.6" fill="#e5eee9"/></g><path d="M1045.00 375.60 L1047.53 381.12 L1053.56 381.82 L1049.09 385.93 L1050.29 391.88 L1045.00 388.90 L1039.71 391.88 L1040.91 385.93 L1036.44 381.82 L1042.47 381.12 Z" fill="none" stroke="#444444" stroke-width="2.2" stroke-linecap="round" stroke-linejoin="round" /><path d="M607.8 481.6 L612.8 486.9 L622.3 477" fill="none" stroke="#ffffff" stroke-width="3.8" stroke-linecap="round" stroke-linejoin="round" /><g transform="translate(0 460.92)"><path d="M660 4.7 A4.5 4.5 0 0 1 664.5 0.2 H678.5 L687.3 7 H705.5 A4 4 0 0 1 709.5 11 V36 A4 4 0 0 1 705.5 40 H664.5 A4.5 4.5 0 0 1 660 35.5 Z" fill="#0b7f40"/><rect x="664.2" y="11.3" width="42" height="24.9" rx="2.6" fill="#d3e5d9"/></g><path d="M1056.00 490.72 L1058.53 496.24 L1064.56 496.94 L1060.09 501.05 L1061.29 507.00 L1056.00 504.02 L1050.71 507.00 L1051.91 501.05 L1047.44 496.94 L1053.47 496.24 Z" fill="none" stroke="#444444" stroke-width="2.2" stroke-linecap="round" stroke-linejoin="round" /><rect x="602.4" y="583.24" width="25.1" height="25.4" rx="5.2" fill="none" stroke="#4a4a4a" stroke-width="2.6"/><g transform="translate(0 576.04)"><path d="M660 4.7 A4.5 4.5 0 0 1 664.5 0.2 H678.5 L687.3 7 H705.5 A4 4 0 0 1 709.5 11 V36 A4 4 0 0 1 705.5 40 H664.5 A4.5 4.5 0 0 1 660 35.5 Z" fill="#0b7f40"/><rect x="664.2" y="11.3" width="42" height="24.9" rx="2.6" fill="#e5eee9"/></g><path d="M1056.00 605.84 L1058.53 611.36 L1064.56 612.06 L1060.09 616.17 L1061.29 622.12 L1056.00 619.14 L1050.71 622.12 L1051.91 616.17 L1047.44 612.06 L1053.47 611.36 Z" fill="none" stroke="#444444" stroke-width="2.2" stroke-linecap="round" stroke-linejoin="round" /><circle cx="1091.00" cy="613.94" r="8.20" fill="#f7cf67"/><rect x="602.4" y="698.36" width="25.1" height="25.4" rx="5.2" fill="none" stroke="#4a4a4a" stroke-width="2.6"/><g transform="translate(0 691.16)"><path d="M660 4.7 A4.5 4.5 0 0 1 664.5 0.2 H678.5 L687.3 7 H705.5 A4 4 0 0 1 709.5 11 V36 A4 4 0 0 1 705.5 40 H664.5 A4.5 4.5 0 0 1 660 35.5 Z" fill="#0b7f40"/><rect x="664.2" y="11.3" width="42" height="24.9" rx="2.6" fill="#e5eee9"/></g><path d="M1056.00 720.96 L1058.53 726.48 L1064.56 727.18 L1060.09 731.29 L1061.29 737.24 L1056.00 734.26 L1050.71 737.24 L1051.91 731.29 L1047.44 727.18 L1053.47 726.48 Z" fill="none" stroke="#444444" stroke-width="2.2" stroke-linecap="round" stroke-linejoin="round" /><rect x="602.4" y="813.48" width="25.1" height="25.4" rx="5.2" fill="none" stroke="#4a4a4a" stroke-width="2.6"/><g transform="translate(0 806.28)"><path d="M660 4.7 A4.5 4.5 0 0 1 664.5 0.2 H678.5 L687.3 7 H705.5 A4 4 0 0 1 709.5 11 V36 A4 4 0 0 1 705.5 40 H664.5 A4.5 4.5 0 0 1 660 35.5 Z" fill="#0b7f40"/><rect x="664.2" y="11.3" width="42" height="24.9" rx="2.6" fill="#e5eee9"/></g><path d="M1056.00 836.08 L1058.53 841.60 L1064.56 842.30 L1060.09 846.41 L1061.29 852.36 L1056.00 849.38 L1050.71 852.36 L1051.91 846.41 L1047.44 842.30 L1053.47 841.60 Z" fill="none" stroke="#444444" stroke-width="2.2" stroke-linecap="round" stroke-linejoin="round" /><rect x="602.4" y="928.60" width="25.1" height="25.4" rx="5.2" fill="none" stroke="#4a4a4a" stroke-width="2.6"/><g transform="translate(0 921.40)"><path d="M660 4.7 A4.5 4.5 0 0 1 664.5 0.2 H678.5 L687.3 7 H705.5 A4 4 0 0 1 709.5 11 V36 A4 4 0 0 1 705.5 40 H664.5 A4.5 4.5 0 0 1 660 35.5 Z" fill="#0b7f40"/><rect x="664.2" y="11.3" width="42" height="24.9" rx="2.6" fill="#e5eee9"/></g><path d="M1056.00 951.20 L1058.53 956.72 L1064.56 957.42 L1060.09 961.53 L1061.29 967.48 L1056.00 964.50 L1050.71 967.48 L1051.91 961.53 L1047.44 957.42 L1053.47 956.72 Z" fill="none" stroke="#444444" stroke-width="2.2" stroke-linecap="round" stroke-linejoin="round" /><rect x="602.4" y="1043.72" width="25.1" height="25.4" rx="5.2" fill="none" stroke="#4a4a4a" stroke-width="2.6"/><g transform="translate(0 1036.52)"><path d="M660 4.7 A4.5 4.5 0 0 1 664.5 0.2 H678.5 L687.3 7 H705.5 A4 4 0 0 1 709.5 11 V36 A4 4 0 0 1 705.5 40 H664.5 A4.5 4.5 0 0 1 660 35.5 Z" fill="#0b7f40"/><rect x="664.2" y="11.3" width="42" height="24.9" rx="2.6" fill="#e5eee9"/></g><path d="M1056.00 1066.32 L1058.53 1071.84 L1064.56 1072.54 L1060.09 1076.65 L1061.29 1082.60 L1056.00 1079.62 L1050.71 1082.60 L1051.91 1076.65 L1047.44 1072.54 L1053.47 1071.84 Z" fill="none" stroke="#444444" stroke-width="2.2" stroke-linecap="round" stroke-linejoin="round" /><rect x="602.4" y="1158.84" width="25.1" height="25.4" rx="5.2" fill="none" stroke="#4a4a4a" stroke-width="2.6"/><g transform="translate(0 1151.64)"><path d="M660 4.7 A4.5 4.5 0 0 1 664.5 0.2 H678.5 L687.3 7 H705.5 A4 4 0 0 1 709.5 11 V36 A4 4 0 0 1 705.5 40 H664.5 A4.5 4.5 0 0 1 660 35.5 Z" fill="#0b7f40"/><rect x="664.2" y="11.3" width="42" height="24.9" rx="2.6" fill="#e5eee9"/></g><path d="M1056.00 1181.44 L1058.53 1186.96 L1064.56 1187.66 L1060.09 1191.77 L1061.29 1197.72 L1056.00 1194.74 L1050.71 1197.72 L1051.91 1191.77 L1047.44 1187.66 L1053.47 1186.96 Z" fill="none" stroke="#444444" stroke-width="2.2" stroke-linecap="round" stroke-linejoin="round" /><circle cx="1091.00" cy="1189.54" r="8.20" fill="#b07561"/><circle cx="1306.00" cy="1189.54" r="8.20" fill="#9fdfe3"/><rect x="602.4" y="1273.96" width="25.1" height="25.4" rx="5.2" fill="none" stroke="#4a4a4a" stroke-width="2.6"/><g transform="translate(0 1266.76)"><path d="M660 4.7 A4.5 4.5 0 0 1 664.5 0.2 H678.5 L687.3 7 H705.5 A4 4 0 0 1 709.5 11 V36 A4 4 0 0 1 705.5 40 H664.5 A4.5 4.5 0 0 1 660 35.5 Z" fill="#0b7f40"/><rect x="664.2" y="11.3" width="42" height="24.9" rx="2.6" fill="#e5eee9"/></g><path d="M1056.00 1296.56 L1058.53 1302.08 L1064.56 1302.78 L1060.09 1306.89 L1061.29 1312.84 L1056.00 1309.86 L1050.71 1312.84 L1051.91 1306.89 L1047.44 1302.78 L1053.47 1302.08 Z" fill="none" stroke="#444444" stroke-width="2.2" stroke-linecap="round" stroke-linejoin="round" /><rect x="602.4" y="1389.08" width="25.1" height="25.4" rx="5.2" fill="none" stroke="#4a4a4a" stroke-width="2.6"/><rect x="664.6" y="1380.58" width="41.1" height="41.1" rx="7" fill="#ffffff" stroke="#eb3a4f" stroke-width="3.2"/><text x="685" y="1407.58" font-family="Liberation Sans" font-weight="700" font-size="15.5" fill="#eb3a4f" text-anchor="middle" textLength="28.3" lengthAdjust="spacingAndGlyphs">PDF</text><path d="M1182.50 1411.68 L1185.03 1417.20 L1191.06 1417.90 L1186.59 1422.01 L1187.79 1427.96 L1182.50 1424.98 L1177.21 1427.96 L1178.41 1422.01 L1173.94 1417.90 L1179.97 1417.20 Z" fill="none" stroke="#444444" stroke-width="2.2" stroke-linecap="round" stroke-linejoin="round" /><rect x="602.4" y="1504.20" width="25.1" height="25.4" rx="5.2" fill="none" stroke="#4a4a4a" stroke-width="2.6"/><rect x="664.6" y="1495.70" width="41.1" height="41.1" rx="7" fill="#ffffff" stroke="#eb3a4f" stroke-width="3.2"/><text x="685" y="1522.70" font-family="Liberation Sans" font-weight="700" font-size="15.5" fill="#eb3a4f" text-anchor="middle" textLength="28.3" lengthAdjust="spacingAndGlyphs">PDF</text><path d="M1056.00 1526.80 L1058.53 1532.32 L1064.56 1533.02 L1060.09 1537.13 L1061.29 1543.08 L1056.00 1540.10 L1050.71 1543.08 L1051.91 1537.13 L1047.44 1533.02 L1053.47 1532.32 Z" fill="none" stroke="#444444" stroke-width="2.2" stroke-linecap="round" stroke-linejoin="round" /><rect x="602.4" y="1619.32" width="25.1" height="25.4" rx="5.2" fill="none" stroke="#4a4a4a" stroke-width="2.6"/><path d="M663.6 1615.92 H706.8 M663.6 1650.42 H706.8" fill="none" stroke="#e23a3e" stroke-width="3.3" stroke-linecap="round" stroke-linejoin="round" /><path d="M669.5 1616.32 V1649.72 M701.3 1622.32 V1649.72" fill="none" stroke="#e23a3e" stroke-width="3.1" stroke-linecap="round" stroke-linejoin="round" /><path d="M681.3 1624.92 V1640.12 L692.5 1632.52 Z" fill="none" stroke="#e23a3e" stroke-width="3.1" stroke-linecap="round" stroke-linejoin="round" /><path d="M1037.40 1641.92 L1039.93 1647.44 L1045.96 1648.14 L1041.49 1652.25 L1042.69 1658.20 L1037.40 1655.22 L1032.11 1658.20 L1033.31 1652.25 L1028.84 1648.14 L1034.87 1647.44 Z" fill="none" stroke="#444444" stroke-width="2.2" stroke-linecap="round" stroke-linejoin="round" /><rect x="602.4" y="1734.44" width="25.1" height="25.4" rx="5.2" fill="none" stroke="#4a4a4a" stroke-width="2.6"/><rect x="664.6" y="1725.94" width="41.1" height="41.1" rx="7" fill="#ffffff" stroke="#eb3a4f" stroke-width="3.2"/><text x="685" y="1752.94" font-family="Liberation Sans" font-weight="700" font-size="15.5" fill="#eb3a4f" text-anchor="middle" textLength="28.3" lengthAdjust="spacingAndGlyphs">PDF</text><path d="M1056.00 1757.04 L1058.53 1762.56 L1064.56 1763.26 L1060.09 1767.37 L1061.29 1773.32 L1056.00 1770.34 L1050.71 1773.32 L1051.91 1767.37 L1047.44 1763.26 L1053.47 1762.56 Z" fill="none" stroke="#444444" stroke-width="2.2" stroke-linecap="round" stroke-linejoin="round" /></svg>
</div>
<div class="r" style="left:562.00px;top:210.00px;width:2335.00px;height:95.60px;background:#fff;border-radius:9px;box-shadow:0 1.5px 1px rgba(0,0,0,0.10),0 4px 22px rgba(0,0,0,0.09);"></div>
<div class="r" style="left:602.00px;top:244.00px;width:27.50px;height:27.30px;background:#0b7f40;border-radius:4.5px;"></div>
<div class="r" style="left:608.60px;top:256.20px;width:14.30px;height:3.40px;background:#ffffff;border-radius:1px;"></div>
<div class="t" style="left:654.0px;top:243.5px;font-size:28.50px;color:#0d6133;font-weight:700;letter-spacing:-1.246px;">1 folder selected</div>
<div class="r" style="left:1404.60px;top:226.50px;width:230.40px;height:62.40px;border:2px solid #93c8a6;border-radius:9px;box-sizing:border-box;"></div>
<div class="r" style="left:1571.60px;top:226.50px;width:2.00px;height:62.40px;background:#4d9a68;"></div>
<div class="t" style="left:1479.0px;top:243.1px;font-size:28.00px;color:#0d5f32;letter-spacing:-1.605px;">Share</div>
<div class="r" style="left:1648.50px;top:226.50px;width:212.50px;height:62.40px;border:2px solid #93c8a6;border-radius:9px;box-sizing:border-box;"></div>
<div class="t" style="left:1723.0px;top:243.1px;font-size:28.00px;color:#0d5f32;letter-spacing:-0.520px;">Copy link</div>
<div class="r" style="left:1874.60px;top:226.50px;width:222.40px;height:62.40px;border:2px solid #93c8a6;border-radius:9px;box-sizing:border-box;"></div>
<div class="t" style="left:1949.0px;top:243.1px;font-size:28.00px;color:#0d5f32;letter-spacing:-0.490px;">Download</div>
<div class="r" style="left:2110.50px;top:226.50px;width:63.10px;height:62.40px;border:2px solid #93c8a6;border-radius:9px;box-sizing:border-box;"></div>
<div class="t" style="left:2754.0px;top:243.6px;font-size:26.50px;color:#222222;letter-spacing:-3.088px;">Esc</div>
<svg class="r" style="left:0;top:0" width="3026" height="1718" viewBox="0 0 3026 1718"><path d="M1450.3 247.5 L1461.5 258 L1450.3 268.5 V262.5 C1443 262 1438 263.5 1434.2 268.5 C1434.8 259.8 1441 253.5 1450.3 253.5 Z" fill="none" stroke="#0d5f32" stroke-width="3.1" stroke-linecap="round" stroke-linejoin="round" /><path d="M1593.5 252.5 L1604 263 L1614.5 252.5" fill="none" stroke="#3e7d56" stroke-width="3" stroke-linecap="round" stroke-linejoin="round" /><g transform="translate(1678.5 244) scale(0.84) translate(-1390.7 -815.9)"><path d="M1405.6 820.6 A9 9 0 1 1 1418.3 833.3 M1395.2 830.9 A9 9 0 1 0 1408.2 843.4 M1403.2 836.3 L1411 828.2" fill="none" stroke="#0d5f32" stroke-width="3.7" stroke-linecap="round"/></g><path d="M1914.6 256 V247.3 A3.4 3.4 0 0 1 1921.4 247.3 V256 L1925 254.2 A2.5 2.5 0 0 1 1927.6 258.3 L1918 265.5 L1908.4 258.3 A2.5 2.5 0 0 1 1911 254.2 Z" fill="none" stroke="#0d5f32" stroke-width="3" stroke-linecap="round" stroke-linejoin="round" /><path d="M1907.6 269.7 H1928.5" fill="none" stroke="#0d5f32" stroke-width="3.3" stroke-linecap="round" stroke-linejoin="round" /><circle cx="2132.80" cy="257.80" r="3.40" fill="#4b8a62"/><circle cx="2141.90" cy="257.80" r="3.40" fill="#4b8a62"/><circle cx="2151.00" cy="257.80" r="3.40" fill="#4b8a62"/><path d="M2811 249.3 L2829.8 268 M2829.8 249.3 L2811 268" fill="none" stroke="#222222" stroke-width="3" stroke-linecap="round" stroke-linejoin="round" /></svg>
<div class="r" style="left:1334.00px;top:458.00px;width:636.00px;height:1168.70px;background:#fff;border-radius:18px;box-shadow:0 0 1.5px rgba(0,0,0,0.12),0 22px 44px rgba(0,0,0,0.13),0 6px 16px rgba(0,0,0,0.05);"></div>
<div class="r" style="left:1350.00px;top:619.70px;width:596.00px;height:72.30px;background:#f4f4f4;border-radius:4px;"></div>
<div class="t" style="left:1469.4px;top:501.5px;font-size:28.90px;color:#1f1f1f;letter-spacing:0.009px;">Open in new tab</div>
<div class="t" style="left:1469.4px;top:571.2px;font-size:28.90px;color:#1f1f1f;letter-spacing:-0.002px;">Properties</div>
<div class="t" style="left:1469.4px;top:641.3px;font-size:28.90px;color:#1f1f1f;letter-spacing:0.237px;">Go to folder location</div>
<div class="t" style="left:1469.4px;top:747.1px;font-size:28.90px;color:#1f1f1f;letter-spacing:-0.287px;">Share...</div>
<div class="t" style="left:1469.4px;top:817.3px;font-size:28.90px;color:#1f1f1f;letter-spacing:-0.153px;">Copy Permalink</div>
<div class="t" style="left:1469.4px;top:922.8px;font-size:28.90px;color:#1f1f1f;letter-spacing:-0.010px;">Move To...</div>
<div class="t" style="left:1469.4px;top:991.3px;font-size:28.90px;color:#1f1f1f;letter-spacing:0.135px;">Copy To...</div>
<div class="t" style="left:1469.4px;top:1062.4px;font-size:28.90px;color:#1f1f1f;letter-spacing:0.195px;">Start a workflow</div>
<div class="t" style="left:1469.4px;top:1132.5px;font-size:28.90px;color:#1f1f1f;letter-spacing:-0.053px;">Organize</div>
<div class="t" style="left:1469.4px;top:1238.3px;font-size:28.90px;color:#1f1f1f;letter-spacing:0.353px;">Download</div>
<div class="t" style="left:1469.4px;top:1307.8px;font-size:28.90px;color:#1f1f1f;letter-spacing:-0.848px;">Rename</div>
<div class="t" style="left:1469.4px;top:1377.4px;font-size:28.90px;color:#1f1f1f;letter-spacing:0.170px;">Follow updates</div>
<div class="t" style="left:1469.4px;top:1447.2px;font-size:28.90px;color:#1f1f1f;letter-spacing:0.203px;">More options</div>
<div class="t" style="left:1469.4px;top:1552.5px;font-size:28.90px;color:#a31f1e;letter-spacing:-0.384px;">Move to Trash</div>
<div class="r" style="left:1350.00px;top:707.05px;width:604.00px;height:1.70px;background:#e9e9e9;"></div>
<div class="r" style="left:1350.00px;top:883.05px;width:604.00px;height:1.70px;background:#e9e9e9;"></div>
<div class="r" style="left:1350.00px;top:1198.25px;width:604.00px;height:1.70px;background:#e9e9e9;"></div>
<div class="r" style="left:1350.00px;top:1513.15px;width:604.00px;height:1.70px;background:#e9e9e9;"></div>
<div class="r" style="left:1687.00px;top:1056.00px;width:75.80px;height:42.60px;background:linear-gradient(90deg,#5d70f6,#8a3ef1);border-radius:21.3px;"></div>
<div class="t" style="left:1701.5px;top:1064.3px;font-size:24.50px;color:#ffffff;letter-spacing:-0.967px;">Beta</div>
<div class="t" style="left:1915.1px;top:925.3px;font-size:26.00px;color:#555555;">Z</div>
<div class="t" style="left:1912.2px;top:993.8px;font-size:26.00px;color:#555555;">C</div>
<div class="t" style="left:1918.6px;top:1241.2px;font-size:24.50px;color:#555555;transform:scaleX(0.78);transform-origin:0 0;">S</div>
<svg class="r" style="left:0;top:0" width="3026" height="1718" viewBox="0 0 3026 1718"><rect x="1347.3" y="616.7" width="601.4" height="81.8" fill="none" stroke="#e20a0a" stroke-width="6"/><path d="M1406 504.7 H1397.5 A5 5 0 0 0 1392.4 509.7 V525.2 A5 5 0 0 0 1397.5 530.2 H1413 A5 5 0 0 0 1418 525.2 V516.8" fill="none" stroke="#4d4d4d" stroke-width="3.2" stroke-linecap="round" stroke-linejoin="round" /><path d="M1400 523 L1421.3 501.8 M1412.3 501.8 H1421.5 V511" fill="none" stroke="#4d4d4d" stroke-width="3.2" stroke-linecap="round" stroke-linejoin="round" /><rect x="1392.3" y="571" width="29.8" height="29.8" rx="5" fill="none" stroke="#4d4d4d" stroke-width="3.2"/><path d="M1400.3 581.3 H1400.6 M1408.2 581.3 H1416 M1400.3 590.7 H1400.6 M1408.2 590.7 H1416" fill="none" stroke="#4d4d4d" stroke-width="3.6" stroke-linecap="round" stroke-linejoin="round" /><circle cx="1405.10" cy="653.90" r="13.40" fill="none" stroke="#4d4d4d" stroke-width="3.2"/><path d="M1414.8 663.6 L1421.8 670.6" fill="none" stroke="#4d4d4d" stroke-width="3.2" stroke-linecap="round" stroke-linejoin="round" /><path d="M1410 749 L1423.3 762 L1410 775.2 V768.3 C1401 767.8 1395.5 769.5 1390.6 774.5 C1391.5 763.5 1398.5 756 1410 756 Z" fill="none" stroke="#4d4d4d" stroke-width="3.2" stroke-linecap="round" stroke-linejoin="round" /><path d="M1405.6 820.6 A9 9 0 1 1 1418.3 833.3 M1395.2 830.9 A9 9 0 1 0 1408.2 843.4 M1403.2 836.3 L1411 828.2" fill="none" stroke="#4d4d4d" stroke-width="3.1" stroke-linecap="round"/><path d="M1391 928.5 A4 4 0 0 1 1395 924.5 H1402 L1406.5 928.3 H1419 A4 4 0 0 1 1423 932.3 V947 A4 4 0 0 1 1419 951 H1395 A4 4 0 0 1 1391 947 Z" fill="none" stroke="#4d4d4d" stroke-width="3.2" stroke-linecap="round" stroke-linejoin="round" /><path d="M1400.8 940 H1412.7 M1408.5 935.8 L1412.7 940 L1408.5 944.2" fill="none" stroke="#4d4d4d" stroke-width="2.9" stroke-linecap="round" stroke-linejoin="round" /><rect x="1392.3" y="999.8" width="22.1" height="21.6" rx="5" fill="none" stroke="#4d4d4d" stroke-width="3.2"/><path d="M1399 992.6 H1416.5 A4.5 4.5 0 0 1 1421 997.1 V1014.2" fill="none" stroke="#4d4d4d" stroke-width="3.2" stroke-linecap="round" stroke-linejoin="round" /><path d="M1392.6 1061 H1399.7 V1067.4 H1392.6 Z" fill="none" stroke="#4d4d4d" stroke-width="3.2" stroke-linecap="round" stroke-linejoin="round" /><path d="M1399.7 1064.2 H1416.2 A6.15 6.15 0 0 1 1416.2 1076.5 H1397 A6.3 6.3 0 0 0 1397 1089.1 H1411.3" fill="none" stroke="#4d4d4d" stroke-width="3.2" stroke-linecap="round" stroke-linejoin="round" /><circle cx="1417.00" cy="1088.60" r="4.40" fill="#ffffff" stroke="#4d4d4d" stroke-width="3.2"/><path d="M1407 1071.3 L1412.5 1076.8 L1407 1082.3 L1401.5 1076.8 Z" fill="#ffffff" stroke="#4d4d4d" stroke-width="3.2" stroke-linecap="round" stroke-linejoin="round" /><path d="M1404.17 1130.98 L1410.23 1130.98 L1411.33 1135.52 L1415.07 1137.68 L1419.56 1136.37 L1422.58 1141.62 L1419.21 1144.84 L1419.21 1149.16 L1422.58 1152.38 L1419.56 1157.63 L1415.07 1156.32 L1411.33 1158.48 L1410.23 1163.02 L1404.17 1163.02 L1403.07 1158.48 L1399.33 1156.32 L1394.84 1157.63 L1391.82 1152.38 L1395.19 1149.16 L1395.19 1144.84 L1391.82 1141.62 L1394.84 1136.37 L1399.33 1137.68 L1403.07 1135.52 Z" fill="none" stroke="#4d4d4d" stroke-width="3.2" stroke-linecap="round" stroke-linejoin="round" /><circle cx="1407.20" cy="1147.00" r="5.20" fill="none" stroke="#4d4d4d" stroke-width="3.2"/><path d="M1402.5 1248.5 V1239.4 A4.5 4.5 0 0 1 1411.5 1239.4 V1248.5 L1415.2 1246.3 A2.8 2.8 0 0 1 1418.8 1250.8 L1407 1262 L1395.2 1250.8 A2.8 2.8 0 0 1 1398.8 1246.3 Z" fill="none" stroke="#4d4d4d" stroke-width="3.2" stroke-linecap="round" stroke-linejoin="round" /><path d="M1394.4 1267.4 H1420" fill="none" stroke="#4d4d4d" stroke-width="3.3" stroke-linecap="round" stroke-linejoin="round" /><path d="M1396.5 1331 L1394.6 1328 A3 3 0 0 1 1395 1324.5 L1413.8 1306 A2.5 2.5 0 0 1 1417.3 1306 L1419.2 1307.9 A2.5 2.5 0 0 1 1419.2 1311.4 L1400.5 1330 A3 3 0 0 1 1397 1331 Z" fill="none" stroke="#4d4d4d" stroke-width="3.2" stroke-linecap="round" stroke-linejoin="round" /><path d="M1394.4 1337.4 H1420" fill="none" stroke="#4d4d4d" stroke-width="3.3" stroke-linecap="round" stroke-linejoin="round" /><path d="M1397.7 1394 V1385 A9.3 9.3 0 0 1 1416.3 1385 V1394 L1419.6 1397.5 A1.5 1.5 0 0 1 1418.6 1400 H1395.4 A1.5 1.5 0 0 1 1394.4 1397.5 Z" fill="none" stroke="#4d4d4d" stroke-width="3.2" stroke-linecap="round" stroke-linejoin="round" /><path d="M1402.5 1406 A4.5 4.5 0 0 0 1411.5 1406" fill="none" stroke="#4d4d4d" stroke-width="3.2" stroke-linecap="round" stroke-linejoin="round" /><circle cx="1395.90" cy="1462.00" r="4.00" fill="#4d4d4d"/><circle cx="1406.90" cy="1462.00" r="4.00" fill="#4d4d4d"/><circle cx="1417.90" cy="1462.00" r="4.00" fill="#4d4d4d"/><path d="M1391.8 1556.8 H1422" fill="none" stroke="#b5423f" stroke-width="3.2" stroke-linecap="round" stroke-linejoin="round" /><path d="M1401.4 1556 V1555.5 A5.6 5.6 0 0 1 1412.6 1555.5 V1556" fill="none" stroke="#b5423f" stroke-width="3.2" stroke-linecap="round" stroke-linejoin="round" /><path d="M1395.8 1557 V1580 A4.7 4.7 0 0 0 1400.5 1584.7 H1413.5 A4.7 4.7 0 0 0 1418.2 1580 V1557" fill="none" stroke="#b5423f" stroke-width="3.2" stroke-linecap="round" stroke-linejoin="round" /><path d="M1403.2 1566 V1575.4 M1410.7 1566 V1575.4" fill="none" stroke="#b5423f" stroke-width="3.4" stroke-linecap="round" stroke-linejoin="round" /><path d="M1911.6 752.9 L1921.8 762.2 L1911.6 771.5" fill="none" stroke="#444444" stroke-width="2.6" stroke-linecap="round" stroke-linejoin="round" /><path d="M1911.6 1068.1 L1921.8 1077.4 L1911.6 1086.7" fill="none" stroke="#444444" stroke-width="2.6" stroke-linecap="round" stroke-linejoin="round" /><path d="M1911.6 1138.3 L1921.8 1147.6 L1911.6 1156.9" fill="none" stroke="#444444" stroke-width="2.6" stroke-linecap="round" stroke-linejoin="round" /><path d="M1911.6 1453.0 L1921.8 1462.3 L1911.6 1471.6" fill="none" stroke="#444444" stroke-width="2.6" stroke-linecap="round" stroke-linejoin="round" /><g transform="translate(1898.1 1244.1)"><path d="M5.5 5.5 H11.2 V11.2 H5.5 Z M5.5 5.5 V3.1 A2.4 2.4 0 1 0 3.1 5.5 Z M11.2 5.5 V3.1 A2.4 2.4 0 1 1 13.6 5.5 Z M5.5 11.2 V13.6 A2.4 2.4 0 1 1 3.1 11.2 Z M11.2 11.2 V13.6 A2.4 2.4 0 1 0 13.6 11.2 Z" fill="none" stroke="#555555" stroke-width="1.6" stroke-linejoin="round"/></g><g transform="translate(1776 648)"><path d="M10.5 4.2 a2.4 2.4 0 0 1 4.8 0 V15.5 l0.6 -3.3 a2.2 2.2 0 0 1 4.3 0.3 V15 l0.5 -1.8 a2.2 2.2 0 0 1 4.2 0.6 V16.5 l0.6 -1 a2 2 0 0 1 3.8 0.9 V24 c0 6 -3.5 10.5 -9.5 10.5 H17.5 c-3.3 0 -5.3 -1.5 -7.2 -4.2 L4 21 a2.3 2.3 0 0 1 3.5 -2.9 L10.5 21.2 Z" fill="#ffffff" stroke="#111111" stroke-width="2" stroke-linejoin="round"/><path d="M16.5 24 V30 M20.5 24 V30 M24.5 24 V30" stroke="#111111" stroke-width="1.6" stroke-linecap="round"/></g></svg>
</body></html>
